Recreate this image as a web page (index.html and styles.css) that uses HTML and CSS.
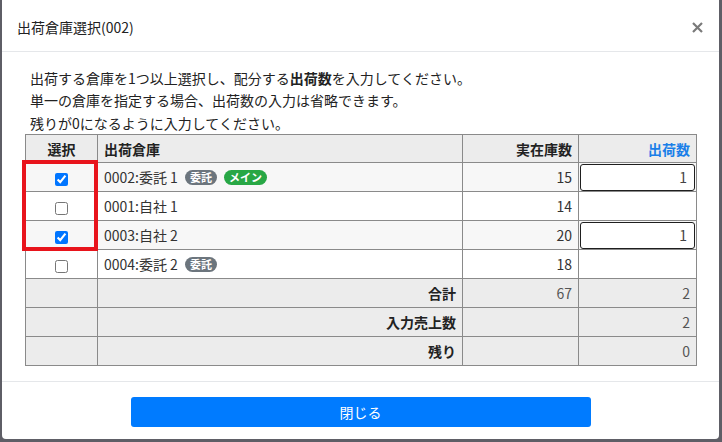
FILE: index.html
```html
<!DOCTYPE html>
<html lang="ja">
<head>
<meta charset="utf-8">
<title>出荷倉庫選択</title>
<link rel="stylesheet" href="styles.css">
</head>
<body>
<div class="modal">
  <div class="modal-header">
    <h5 class="modal-title">出荷倉庫選択(002)</h5>
    <span class="close" aria-label="閉じる"><svg width="11" height="11" viewBox="0 0 11 11"><path d="M1 1L10 10M10 1L1 10" stroke="#7a7a7a" stroke-width="2.2" stroke-linecap="butt"/></svg></span>
  </div>
  <div class="modal-body">
    <div class="intro">
      <p>出荷する倉庫を1つ以上選択し、配分する<b>出荷数</b>を入力してください。</p>
      <p>単一の倉庫を指定する場合、出荷数の入力は省略できます。</p>
      <p>残りが0になるように入力してください。</p>
    </div>
    <div class="table-wrap">
      <table class="wh-table">
        <colgroup>
          <col class="c-sel"><col class="c-name"><col class="c-stock"><col class="c-qty">
        </colgroup>
        <thead>
          <tr>
            <th class="center">選択</th>
            <th class="left">出荷倉庫</th>
            <th class="right">実在庫数</th>
            <th class="right blue">出荷数</th>
          </tr>
        </thead>
        <tbody>
          <tr class="odd">
            <td class="center"><input type="checkbox" checked></td>
            <td>0002:委託 1<span class="badge gray">委託</span><span class="badge green">メイン</span></td>
            <td class="right">15</td>
            <td class="inp"><input type="text" class="qty" value="1"></td>
          </tr>
          <tr>
            <td class="center"><input type="checkbox"></td>
            <td>0001:自社 1</td>
            <td class="right">14</td>
            <td class="inp"></td>
          </tr>
          <tr class="odd">
            <td class="center"><input type="checkbox" checked></td>
            <td>0003:自社 2</td>
            <td class="right">20</td>
            <td class="inp"><input type="text" class="qty" value="1"></td>
          </tr>
          <tr>
            <td class="center"><input type="checkbox"></td>
            <td>0004:委託 2<span class="badge gray">委託</span></td>
            <td class="right">18</td>
            <td class="inp"></td>
          </tr>
        </tbody>
        <tfoot>
          <tr>
            <td></td>
            <th class="right">合計</th>
            <td class="right num">67</td>
            <td class="right num">2</td>
          </tr>
          <tr>
            <td></td>
            <th class="right">入力売上数</th>
            <td></td>
            <td class="right num">2</td>
          </tr>
          <tr>
            <td></td>
            <th class="right">残り</th>
            <td></td>
            <td class="right num">0</td>
          </tr>
        </tfoot>
      </table>
      <div class="highlight"></div>
    </div>
  </div>
  <div class="modal-footer">
    <button class="btn-close">閉じる</button>
  </div>
</div>
</body>
</html>
```
FILE: styles.css
```css
* { box-sizing: border-box; }
html, body { margin: 0; padding: 0; }
body {
  background: #5e5e66;
  font-family: "Noto Sans CJK JP", "Noto Sans", sans-serif;
  font-size: 14px;
  color: #212529;
  height: 442px;
  overflow: hidden;
}
.modal {
  margin: 0 3px 0 2px;
  height: 439px;
  background: #fff;
  border-radius: 0 0 4px 4px;
  display: flex;
  flex-direction: column;
}
.modal-header {
  height: 53px;
  display: flex;
  align-items: center;
  justify-content: space-between;
  padding: 0 16px 0 15px;
  border-bottom: 1px solid #e5e7ea;
}
.modal-title {
  margin: 0;
  font-size: 14px;
  font-weight: 400;
  color: #222;
  padding-top: 4px;
}
.close {
  display: flex;
  padding-top: 5px;
}
.modal-body {
  padding: 15px 22px 15px 23px;
}
.intro { padding-left: 5px; }
.intro p {
  margin: 0;
  line-height: 22.5px;
  color: #222;
}
.intro b { font-weight: 700; }
.table-wrap { position: relative; }
.wh-table {
  width: 100%;
  border-collapse: collapse;
  border: 1px solid #333;
}
.c-sel { width: 72px; }
.c-stock { width: 116px; }
.c-qty { width: 118px; }
.wh-table th, .wh-table td {
  border: 1px solid #8a8a8a;
  height: 29px;
  padding: 0 6px;
  line-height: 20px;
  vertical-align: middle;
  color: #333;
  font-weight: 400;
}
.wh-table thead th {
  height: 28px;
  background: #ececec;
  font-weight: 700;
  color: #222;
}
.wh-table tfoot th, .wh-table tfoot td {
  background: #ececec;
}
.wh-table tfoot th { font-weight: 700; color: #222; }
.wh-table tr.odd td { background: #f7f7f7; }
.center { text-align: center; }
.left { text-align: left; }
.right { text-align: right; }
.wh-table th.blue { color: #1a7fe8; }
.num { color: #555 !important; }
.wh-table td.inp { padding: 0 1px; }
.qty {
  display: block;
  width: 100%;
  height: 27px;
  border: 1px solid #1f1f1f;
  border-radius: 3px;
  text-align: right;
  font-family: inherit;
  font-size: 14px;
  color: #444;
  padding: 0 7px;
  background: #fff;
}
input[type=checkbox] {
  margin: 0;
  width: 13px;
  height: 13px;
  vertical-align: middle;
  accent-color: #0075ff;
}
.badge {
  display: inline-block;
  font-size: 11px;
  font-weight: 700;
  color: #fff;
  line-height: 15px;
  padding: 0 5px;
  border-radius: 8px;
  vertical-align: 1px;
  margin-left: 7px;
}
.badge.gray { background: #6c757d; }
.badge.green { background: #28a745; }
.highlight {
  position: absolute;
  left: -3px;
  top: 26px;
  width: 76px;
  height: 91px;
  border: 4px solid #e8141c;
  pointer-events: none;
}
.modal-footer {
  border-top: 1px solid #e5e7ea;
  padding: 15px 0 12px;
  display: flex;
  justify-content: center;
}
.btn-close {
  width: 460px;
  height: 30px;
  background: #007bff;
  border: none;
  border-radius: 3px;
  color: #fff;
  font-family: inherit;
  font-size: 14px;
}
```
